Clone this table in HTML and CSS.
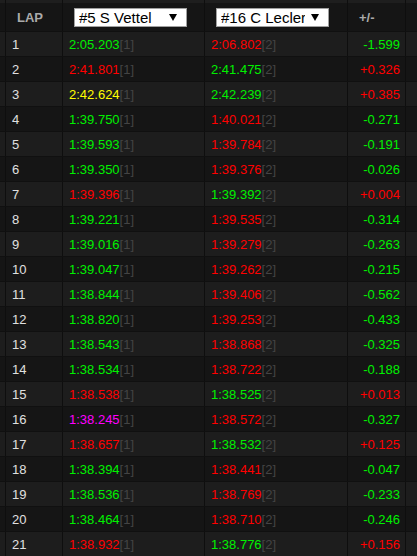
FILE: index.html
```html
<!DOCTYPE html>
<html>
<head>
<meta charset="utf-8">
<link rel="stylesheet" href="styles.css">
</head>
<body>
<div class="laps">
  <div class="row strip"><div class="c"></div><div class="c"></div><div class="c"></div><div class="c"></div><div class="c"></div></div>
  <div class="row head">
    <div class="c h">LAP</div>
    <div class="c h"><div class="sel"><span class="st">#5 S Vettel</span><svg class="arr" width="8" height="7" viewBox="0 0 8 7"><path d="M0 0H8L4 7Z" fill="#000"/></svg></div></div>
    <div class="c h"><div class="sel"><span class="st">#16 C Leclerc</span><svg class="arr" width="8" height="7" viewBox="0 0 8 7"><path d="M0 0H8L4 7Z" fill="#000"/></svg></div></div>
    <div class="c h">+/-</div>
    <div class="c"></div>
  </div>
  <div class="row"><div class="c n">1</div><div class="c t"><span class="g">2:05.203</span><span class="b">[1]</span></div><div class="c t"><span class="r">2:06.802</span><span class="b">[2]</span></div><div class="c d g">-1.599</div><div class="c"></div></div>
  <div class="row"><div class="c n">2</div><div class="c t"><span class="r">2:41.801</span><span class="b">[1]</span></div><div class="c t"><span class="g">2:41.475</span><span class="b">[2]</span></div><div class="c d r">+0.326</div><div class="c"></div></div>
  <div class="row"><div class="c n">3</div><div class="c t"><span class="y">2:42.624</span><span class="b">[1]</span></div><div class="c t"><span class="g">2:42.239</span><span class="b">[2]</span></div><div class="c d r">+0.385</div><div class="c"></div></div>
  <div class="row"><div class="c n">4</div><div class="c t"><span class="g">1:39.750</span><span class="b">[1]</span></div><div class="c t"><span class="r">1:40.021</span><span class="b">[2]</span></div><div class="c d g">-0.271</div><div class="c"></div></div>
  <div class="row"><div class="c n">5</div><div class="c t"><span class="g">1:39.593</span><span class="b">[1]</span></div><div class="c t"><span class="r">1:39.784</span><span class="b">[2]</span></div><div class="c d g">-0.191</div><div class="c"></div></div>
  <div class="row"><div class="c n">6</div><div class="c t"><span class="g">1:39.350</span><span class="b">[1]</span></div><div class="c t"><span class="r">1:39.376</span><span class="b">[2]</span></div><div class="c d g">-0.026</div><div class="c"></div></div>
  <div class="row"><div class="c n">7</div><div class="c t"><span class="r">1:39.396</span><span class="b">[1]</span></div><div class="c t"><span class="g">1:39.392</span><span class="b">[2]</span></div><div class="c d r">+0.004</div><div class="c"></div></div>
  <div class="row"><div class="c n">8</div><div class="c t"><span class="g">1:39.221</span><span class="b">[1]</span></div><div class="c t"><span class="r">1:39.535</span><span class="b">[2]</span></div><div class="c d g">-0.314</div><div class="c"></div></div>
  <div class="row"><div class="c n">9</div><div class="c t"><span class="g">1:39.016</span><span class="b">[1]</span></div><div class="c t"><span class="r">1:39.279</span><span class="b">[2]</span></div><div class="c d g">-0.263</div><div class="c"></div></div>
  <div class="row"><div class="c n">10</div><div class="c t"><span class="g">1:39.047</span><span class="b">[1]</span></div><div class="c t"><span class="r">1:39.262</span><span class="b">[2]</span></div><div class="c d g">-0.215</div><div class="c"></div></div>
  <div class="row"><div class="c n">11</div><div class="c t"><span class="g">1:38.844</span><span class="b">[1]</span></div><div class="c t"><span class="r">1:39.406</span><span class="b">[2]</span></div><div class="c d g">-0.562</div><div class="c"></div></div>
  <div class="row"><div class="c n">12</div><div class="c t"><span class="g">1:38.820</span><span class="b">[1]</span></div><div class="c t"><span class="r">1:39.253</span><span class="b">[2]</span></div><div class="c d g">-0.433</div><div class="c"></div></div>
  <div class="row"><div class="c n">13</div><div class="c t"><span class="g">1:38.543</span><span class="b">[1]</span></div><div class="c t"><span class="r">1:38.868</span><span class="b">[2]</span></div><div class="c d g">-0.325</div><div class="c"></div></div>
  <div class="row"><div class="c n">14</div><div class="c t"><span class="g">1:38.534</span><span class="b">[1]</span></div><div class="c t"><span class="r">1:38.722</span><span class="b">[2]</span></div><div class="c d g">-0.188</div><div class="c"></div></div>
  <div class="row"><div class="c n">15</div><div class="c t"><span class="r">1:38.538</span><span class="b">[1]</span></div><div class="c t"><span class="g">1:38.525</span><span class="b">[2]</span></div><div class="c d r">+0.013</div><div class="c"></div></div>
  <div class="row"><div class="c n">16</div><div class="c t"><span class="m">1:38.245</span><span class="b">[1]</span></div><div class="c t"><span class="r">1:38.572</span><span class="b">[2]</span></div><div class="c d g">-0.327</div><div class="c"></div></div>
  <div class="row"><div class="c n">17</div><div class="c t"><span class="r">1:38.657</span><span class="b">[1]</span></div><div class="c t"><span class="g">1:38.532</span><span class="b">[2]</span></div><div class="c d r">+0.125</div><div class="c"></div></div>
  <div class="row"><div class="c n">18</div><div class="c t"><span class="g">1:38.394</span><span class="b">[1]</span></div><div class="c t"><span class="r">1:38.441</span><span class="b">[2]</span></div><div class="c d g">-0.047</div><div class="c"></div></div>
  <div class="row"><div class="c n">19</div><div class="c t"><span class="g">1:38.536</span><span class="b">[1]</span></div><div class="c t"><span class="r">1:38.769</span><span class="b">[2]</span></div><div class="c d g">-0.233</div><div class="c"></div></div>
  <div class="row"><div class="c n">20</div><div class="c t"><span class="g">1:38.464</span><span class="b">[1]</span></div><div class="c t"><span class="r">1:38.710</span><span class="b">[2]</span></div><div class="c d g">-0.246</div><div class="c"></div></div>
  <div class="row"><div class="c n">21</div><div class="c t"><span class="r">1:38.932</span><span class="b">[1]</span></div><div class="c t"><span class="g">1:38.776</span><span class="b">[2]</span></div><div class="c d r">+0.156</div><div class="c"></div></div>
</div>
</body>
</html>
```

FILE: styles.css
```css
html, body {
  margin: 0;
  padding: 0;
  background: #1a1a1a;
  overflow: hidden;
}
body {
  font-family: "Liberation Sans", Arial, sans-serif;
  font-size: 13px;
  color: #e0e0e0;
}
.laps {
  display: flex;
  flex-direction: column;
}
.row {
  display: grid;
  grid-template-columns: 57px 142px 143px 58px 1fr;
  padding-left: 5px;
  height: 25px;
  box-sizing: border-box;
  border-top: 1px solid #101010;
  background: #151515;
}
.row:nth-child(odd) {
  background: #1d1d1d;
}
.row.strip {
  height: 3px;
  border-top: 0;
  background: #1e1e1e;
}
.row.head {
  height: 28px;
  background: #151515;
  border-top: 0;
}
.c {
  border-left: 1px solid #0e0e0e;
  display: flex;
  align-items: center;
  padding: 0 6px;
  white-space: nowrap;
  overflow: hidden;
  min-width: 0;
}
.c.h {
  padding: 0 0 0 11px;
  font-weight: bold;
  color: #aaaaaa;
}
.c.d {
  justify-content: flex-end;
  padding-right: 5px;
}
.n { color: #e0e0e0; }
.g { color: #00f000; }
.r { color: #ff0000; }
.y { color: #ffff00; }
.m { color: #ff00ff; }
.b { color: #444444; }
.sel {
  display: flex;
  align-items: center;
  width: 113px;
  height: 19px;
  box-sizing: border-box;
  background: #ffffff;
  border: 1px solid #a0a0a0;
  padding: 0 9px 0 4px;
  font-family: "Liberation Sans", Arial, sans-serif;
  font-weight: normal;
  font-size: 15px;
  color: #000;
}
.st {
  flex: 1;
  overflow: hidden;
  white-space: nowrap;
  min-width: 0;
}
.arr {
  flex: none;
  margin-left: 6px;
}
```
